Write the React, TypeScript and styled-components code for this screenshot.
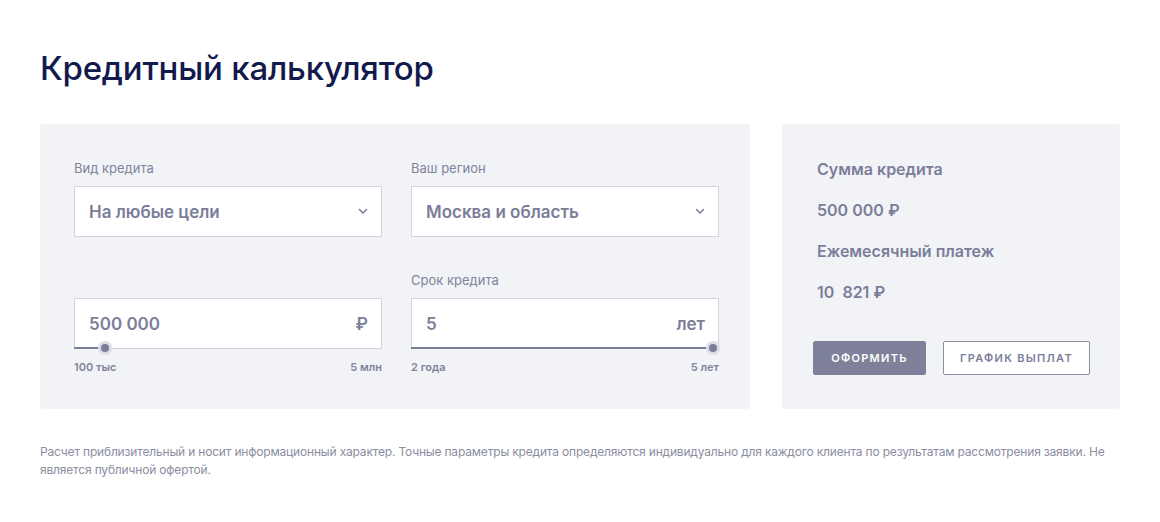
import styled, { createGlobalStyle } from "styled-components";

const colors = {
  navy: "#121a4d",
  panel: "#f2f3f7",
  text: "#7b7e99",
  label: "#80839b",
  border: "#d3d5de",
  track: "#7b7e99",
  note: "#8b8da1",
};

const GlobalStyle = createGlobalStyle`
  body {
    margin: 0;
    background: #fff;
    font-family: Inter, "Noto Sans", sans-serif;
  }
`;

const Page = styled.div`
  padding: 48px 40px 0;
`;

const Title = styled.h1`
  margin: 0 0 36px;
  font-size: 33px;
  line-height: 40px;
  font-weight: 500;
  color: ${colors.navy};
  letter-spacing: -0.2px;
`;

const Panels = styled.div`
  display: grid;
  grid-template-columns: 710px 338px;
  gap: 32px;
`;

const Panel = styled.div`
  background: ${colors.panel};
  border-radius: 4px;
  height: 285px;
  box-sizing: border-box;
`;

const FormPanel = styled(Panel)`
  padding: 36px 31px 0 34px;
  display: grid;
  grid-template-columns: 308px 308px;
  column-gap: 29px;
  row-gap: 35px;
  align-content: start;
`;

const Field = styled.div`
  display: flex;
  flex-direction: column;
`;

const Label = styled.div`
  font-size: 13px;
  line-height: 16px;
  color: ${colors.label};
  margin-bottom: 10px;
  min-height: 16px;
`;

const Box = styled.div`
  height: 51px;
  box-sizing: border-box;
  background: #fff;
  border: 1px solid ${colors.border};
  display: flex;
  align-items: center;
  justify-content: space-between;
  padding: 0 13px 0 14px;
  font-size: 17px;
  font-weight: 600;
  color: ${colors.text};
`;

const Unit = styled.span`
  font-size: 17px;
  font-weight: 600;
`;

const Slider = styled.div`
  position: relative;
  height: 2px;
  margin-top: -2px;
`;

const Fill = styled.div`
  height: 2px;
  background: ${colors.track};
`;

const Thumb = styled.div`
  position: absolute;
  top: -6px;
  width: 14px;
  height: 14px;
  margin-left: -7px;
  border-radius: 50%;
  background: #dcdde6;
  display: flex;
  align-items: center;
  justify-content: center;

  &::after {
    content: "";
    width: 8px;
    height: 8px;
    border-radius: 50%;
    background: ${colors.track};
  }
`;

const Range = styled.div`
  display: flex;
  justify-content: space-between;
  margin-top: 11px;
  font-size: 11px;
  line-height: 14px;
  font-weight: 600;
  color: ${colors.label};
`;

const ResultPanel = styled(Panel)`
  padding: 35px 30px 0 35px;
  display: flex;
  flex-direction: column;
`;

const ResultText = styled.div`
  font-size: 16px;
  line-height: 20px;
  font-weight: 600;
  color: ${colors.text};
  margin-bottom: 21px;
`;

const Buttons = styled.div`
  display: flex;
  gap: 17px;
  margin-top: 18px;
  margin-left: -4px;
`;

const Button = styled.button<{ $primary?: boolean }>`
  height: 34px;
  width: ${(p) => (p.$primary ? 113 : 147)}px;
  padding: 0;
  white-space: nowrap;
  border-radius: 2px;
  font-family: Inter, "Noto Sans", sans-serif;
  font-size: 11px;
  font-weight: 600;
  letter-spacing: 1.3px;
  cursor: pointer;
  border: 1px solid ${(p) => (p.$primary ? "#7e8199" : "#8c8fa6")};
  background: ${(p) => (p.$primary ? "#7e8199" : "#fff")};
  color: ${(p) => (p.$primary ? "#fff" : "#7b7e99")};
`;

const Note = styled.p`
  margin: 34px 0 0;
  font-size: 12px;
  line-height: 18px;
  letter-spacing: -0.18px;
  color: ${colors.note};
`;

function Chevron() {
  return (
    <svg width="10" height="7" viewBox="0 0 10 7">
      <path
        d="M1.5 1.5 5 5 8.5 1.5"
        fill="none"
        stroke={colors.text}
        strokeWidth="1.6"
        strokeLinecap="round"
        strokeLinejoin="round"
      />
    </svg>
  );
}

function SliderBar({ percent }: { percent: number }) {
  return (
    <Slider>
      <Fill style={{ width: `${percent}%` }} />
      <Thumb style={{ left: `${percent}%` }} />
    </Slider>
  );
}

export default function App() {
  return (
    <Page>
      <GlobalStyle />
      <Title>Кредитный калькулятор</Title>
      <Panels>
        <FormPanel>
          <Field>
            <Label>Вид кредита</Label>
            <Box>
              На любые цели
              <Chevron />
            </Box>
          </Field>
          <Field>
            <Label>Ваш регион</Label>
            <Box>
              Москва и область
              <Chevron />
            </Box>
          </Field>
          <Field>
            <Label />
            <Box>
              500 000
              <Unit>₽</Unit>
            </Box>
            <SliderBar percent={10} />
            <Range>
              <span>100 тыс</span>
              <span>5 млн</span>
            </Range>
          </Field>
          <Field>
            <Label>Срок кредита</Label>
            <Box>
              5<Unit>лет</Unit>
            </Box>
            <SliderBar percent={98} />
            <Range>
              <span>2 года</span>
              <span>5 лет</span>
            </Range>
          </Field>
        </FormPanel>
        <ResultPanel>
          <ResultText>Сумма кредита</ResultText>
          <ResultText>500 000 ₽</ResultText>
          <ResultText>Ежемесячный платеж</ResultText>
          <ResultText>10&nbsp; 821 ₽</ResultText>
          <Buttons>
            <Button $primary>ОФОРМИТЬ</Button>
            <Button>ГРАФИК ВЫПЛАТ</Button>
          </Buttons>
        </ResultPanel>
      </Panels>
      <Note>
        Расчет приблизительный и носит информационный характер. Точные параметры кредита
        определяются индивидуально для каждого клиента по результатам рассмотрения заявки. Не
        является публичной офертой.
      </Note>
    </Page>
  );
}
